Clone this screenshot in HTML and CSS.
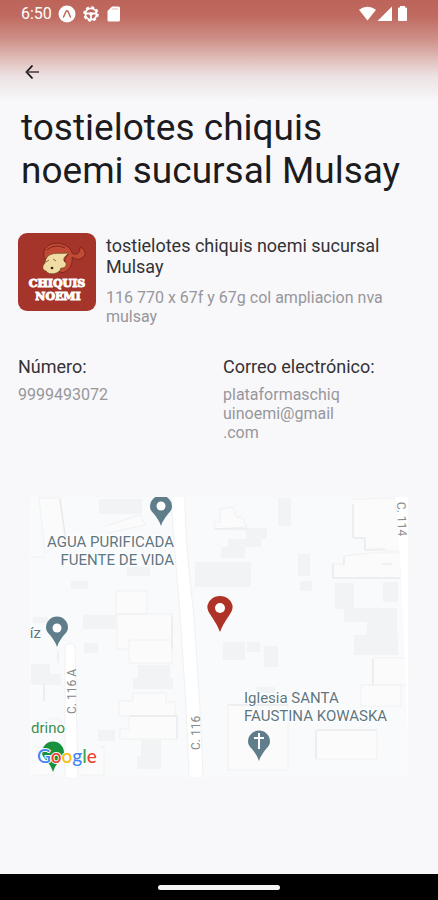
FILE: index.html
```html
<!DOCTYPE html>
<html lang="es">
<head>
<meta charset="utf-8">
<meta name="viewport" content="width=device-width, initial-scale=1">
<title>tostielotes chiquis noemi sucursal Mulsay</title>
<link rel="stylesheet" href="styles.css">
</head>
<body>
<div class="screen">
  <header class="top">
    <div class="status">
      <div class="status-group">
        <span class="clock">6:50</span>
        <svg class="status-icon" viewBox="0 0 18 18" aria-hidden="true">
          <circle cx="9" cy="9" r="8.500" fill="#fff"/>
          <path d="M5.500 12 8 6.500Q9 4.800 10 6.500L12.500 12" fill="none" stroke="#bd6459" stroke-width="1.500" stroke-linecap="round"/>
        </svg>
        <svg class="status-icon" viewBox="0 0 18 18" aria-hidden="true" fill="none" stroke="#fff">
          <circle cx="9" cy="9" r="7" stroke-width="1.600" stroke-dasharray="3 2.500"/>
          <circle cx="9" cy="9" r="5.700" stroke-width="1.800"/>
          <path d="M3 8.500H15M9 9V15" stroke-width="1.800"/>
          <circle cx="9" cy="9" r="1.800" fill="#fff" stroke="none"/>
        </svg>
        <svg class="status-icon" viewBox="0 0 18 18" aria-hidden="true">
          <path d="M6 1.500H12.500Q14 1.500 14 3V15Q14 16.500 12.500 16.500H3Q1.500 16.500 1.500 15V6Z" fill="#fff"/>
          <path d="M6 4H12" stroke="#e8c6c1" stroke-width="1.200"/>
        </svg>
      </div>
      <svg class="signals" viewBox="0 0 50 16" aria-hidden="true" fill="#fff">
        <path d="M-1 3.800Q7.500-2.200 16 3.800L7.500 14.500Z"/>
        <path d="M32 .5V15H17.500Z"/>
        <path d="M39 1.500H40V0H45V1.500H46Q47 1.500 47 2.500V14Q47 15 46 15H39Q38 15 38 14V2.500Q38 1.500 39 1.500Z"/>
      </svg>
    </div>
    <button class="back" type="button" aria-label="Volver">
      <svg viewBox="0 0 16 16" aria-hidden="true"><path d="M7.500 1.500 1.500 8 7.500 14.500" fill="none" stroke="#171213" stroke-width="1.800"/><path d="M1.500 8H14" stroke="#4d4445" stroke-width="1.600"/></svg>
    </button>
  </header>

  <main class="content">
    <h1>tostielotes chiquis noemi sucursal Mulsay</h1>

    <section class="branch">
      <svg class="logo" viewBox="0 0 78 78" role="img" aria-label="Chiquis Noemi">
        <rect width="78" height="78" rx="9" fill="#a5342a"/>
        <path d="M26 24C24 13 35 8 44 11C50 13 53 16 54 20C59 23 62 20 62 14C67 16 69 22 65 24C62 28 57 26 54 24C55 32 51 38 44 40L31 31Z" fill="#c24a35" stroke="#6f2018" stroke-width=".8"/>
        <path d="M30 23C35 19 42 21 51 20C48 23 45 24 46 28C50 30 48 36 43 35C42 41 31 43 28 38C24 37 24 33 27 30Q27 26 30 23Z" fill="#f0dda4" stroke="#6f4526" stroke-width=".7"/>
        <path d="M29 17Q37 10 47 15M50 21C49 24 46 25 47 29" fill="none" stroke="#6f2018" stroke-width=".9"/>
        <path d="M28 29 31 27M35 26 38 28" stroke="#806040" stroke-width=".9"/>
        <circle cx="34" cy="35" r="1.300" fill="#302018"/>
        <text class="logo-text" x="39" y="54" text-anchor="middle">CHIQUIS</text>
        <text class="logo-text" x="40" y="67" text-anchor="middle">NOEMI</text>
      </svg>
      <div class="branch-text">
        <h2>tostielotes chiquis noemi sucursal Mulsay</h2>
        <p>116 770 x 67f y 67g col ampliacion nva mulsay</p>
      </div>
    </section>

    <section class="contact">
      <div>
        <h2>Número:</h2>
        <p>9999493072</p>
      </div>
      <div>
        <h2>Correo electrónico:</h2>
        <p>plataformaschiq<br>uinoemi@gmail<br>.com</p>
      </div>
    </section>

    <svg class="map" viewBox="0 0 378 280" role="img" aria-label="Mapa de la sucursal">
      <defs>
        <path id="pin" d="M0 0C-1.500-5-4-8-7-12C-10-15-11-17-11-19.500A11 11 0 0 1 11-19.500C11-17 10-15 7-12C4-8 1.500-5 0 0Z"/>
      </defs>
      <rect width="378" height="280" fill="#f9fafb"/>

      <g fill="#f1f3f5">
        <path d="M69 2H112V17H69ZM41 84H58V92H41ZM97 70H120V79H97ZM53 118H86V132H53ZM3 120H18V126H3Z"/>
        <path d="M248 1H261V29H248ZM268 57H280V79H268ZM270 84H282V94H270ZM165 65H221V90H165ZM191 50H198V42H216V31H237V42H231V50H215V61H191Z"/>
        <path d="M305 86H324V111H367V138H337V125H314V112H305ZM353 85H368V105H353Z"/>
        <path d="M54 146H68V156H54ZM1 167H20V177H31V188H1ZM108 168H140V181H143V192H103V181H108ZM68 233H85V244H68ZM111 243H131V272H107V259H111Z"/>
        <path d="M193 145H215V163H193ZM217 145H230V155H217ZM234 149H248V170H234ZM226 190H245V196H226ZM324 138H368V158H324Z"/>
      </g>

      <g fill="#fbfbfb" stroke="#f0f1f2" stroke-width="1">
        <path d="M9 1H29L35 42L15 56ZM1 60H15"/>
        <path d="M75 29 110 18 115 28 78 36M86 94H117V117H86ZM87 117H142V152H87Z"/>
        <path d="M324 2 365 1 371 54H355L354 51L335 53V41H323V7M314 68V59L343 56H371V81H303V67H314ZM185 32 217 30L212 20H206L203 10L190 12V25H185Z"/>
        <path d="M99 143H142V166H99ZM103 196H136V205H145V219H89V204H103ZM99 219H147V242H90V232H99Z"/>
        <path d="M198 208H258V273H198ZM286 233H347V262H286ZM343 161H377V188H343ZM331 188H371V209H331ZM1 187H14V204M17 222H31V231M3 250H24V278H3M70 250H74V278H50"/>
      </g>
      <g fill="none" stroke="#e4e6e8" stroke-width="1">
        <path d="M30 1 36 43M323 7V41H335V53H354M303 67V81H370M314 60V68M352 67H362M142 120V152M28 154V166M14 187V204M286 234V262M343 162V188M198 208H258M100 219H147V242M185 32H217M286 233H347"/>
      </g>

      <g fill="#fff" stroke="#f0f1f3" stroke-width="1">
        <path d="M141-2H155C155 60 164 105 166 149C169 195 172 240 173 282H159C158 240 155 190 152 149C149 95 144 55 141-2Z"/>
        <path d="M35 149Q40 144 45 149L48 282H35Z"/>
        <path d="M365-2H380V282C375 180 373 80 365-2Z" stroke="none"/>
      </g>

      <g class="street">
        <text transform="translate(46 217) rotate(-90)">C. 116 A</text>
        <text transform="translate(170 253) rotate(-90)">C. 116</text>
        <text transform="translate(367 5) rotate(88)">C. 114</text>
      </g>

      <g class="place">
        <text x="144" y="50" text-anchor="end">AGUA PURIFICADA</text>
        <text x="144" y="68" text-anchor="end">FUENTE DE VIDA</text>
        <text x="214" y="206">Iglesia SANTA</text>
        <text x="214" y="224">FAUSTINA KOWASKA</text>
        <text x="11" y="141" text-anchor="end">íz</text>
        <text class="park" x="1" y="236">drino</text>
      </g>

      <g fill="#607d8b">
        <use href="#pin" x="131" y="29"/>
        <use href="#pin" x="27" y="150"/>
        <use href="#pin" x="229" y="264"/>
      </g>
      <use href="#pin" x="23" y="275" fill="#17913b"/>
      <g fill="#fff">
        <circle cx="131" cy="9" r="4.500"/>
        <circle cx="27" cy="131" r="4.500"/>
        <path d="M228 236H230V240H234V242H230V252H228V242H224V240H228Z"/>
      </g>
      <path d="M190 135C187 127 183 122 180 117C177 113 177 109 178 107A13 13 0 0 1 202 107C203 109 203 113 200 117C197 122 193 127 190 135Z" fill="#ae3227"/>
      <circle cx="190" cy="111" r="5" fill="#fff"/>
      <text class="google" x="7" y="266"><tspan fill="#4285f4">G</tspan><tspan fill="#ea4335">o</tspan><tspan fill="#fbbc05">o</tspan><tspan fill="#4285f4">g</tspan><tspan fill="#34a853">l</tspan><tspan fill="#ea4335">e</tspan></text>
    </svg>
  </main>

  <footer class="nav"><div class="handle"></div></footer>
</div>
</body>
</html>
```
FILE: styles.css
```css
* {
  box-sizing: border-box;
}

body {
  margin: 0;
  font-family: Roboto, "Liberation Sans", sans-serif;
  color: #1c1b1d;
  background: #f8f8fb;
}

h1, h2, p {
  margin: 0;
  font-weight: 400;
}

.screen {
  min-height: 100vh;
  display: flex;
  flex-direction: column;
  background: linear-gradient(#bd6459 0, #bf6a60 16px, #cd8e86 38px, #dfbbb6 58px, #ece1e2 76px, #f8f8fb 102px);
}

.top {
  padding: 4px 28px 0 21px;
}

.status {
  display: flex;
  align-items: center;
  justify-content: space-between;
  height: 20px;
}

.status-group {
  display: flex;
  align-items: center;
  gap: 6px;
}

.clock {
  color: #fff;
  font-size: 16px;
  line-height: 20px;
}

.status-icon {
  width: 18px;
  height: 18px;
}

.signals {
  width: 50px;
  height: 16px;
  overflow: visible;
}

.back {
  display: block;
  width: 24px;
  height: 24px;
  margin-top: 36px;
  padding: 4px;
  border: 0;
  background: none;
}

.back svg {
  display: block;
  width: 16px;
  height: 16px;
}

.content {
  flex: 1;
  padding: 22px 18px 0;
}

h1 {
  padding: 0 3px;
  font-size: 37px;
  line-height: 43px;
}

.branch {
  display: flex;
  gap: 10px;
  margin-top: 41px;
}

.logo {
  flex: none;
  width: 78px;
  height: 78px;
}

.logo-text {
  font: 700 11px "DejaVu Serif", serif;
  fill: #fff;
  stroke: #fff;
  stroke-width: 1px;
}

.branch-text {
  padding-top: 2px;
}

h2 {
  font-size: 18px;
  line-height: 21px;
  color: #333235;
}

p {
  font-size: 16px;
  line-height: 19px;
  color: #97969a;
}

.branch-text p {
  margin-top: 11px;
}

.contact {
  display: grid;
  grid-template-columns: 1fr 1fr;
  gap: 8px;
  margin-top: 30px;
}

.contact p {
  margin-top: 8px;
}

.map {
  display: block;
  width: calc(100% - 24px);
  margin: 55px 12px 24px;
}

.place {
  font-size: 15px;
  fill: #607680;
  stroke: #fff;
  stroke-width: 2px;
  paint-order: stroke;
}

.park {
  fill: #3c8c50;
}

.street {
  font-size: 12px;
  fill: #85888b;
}

.google {
  font: 500 19px Lato, sans-serif;
  stroke: #fff;
  stroke-width: 2px;
  paint-order: stroke;
}

.nav {
  display: flex;
  align-items: center;
  justify-content: center;
  height: 26px;
  background: #000;
}

.handle {
  width: 122px;
  height: 5px;
  border-radius: 3px;
  background: #f5f5f5;
}
```
